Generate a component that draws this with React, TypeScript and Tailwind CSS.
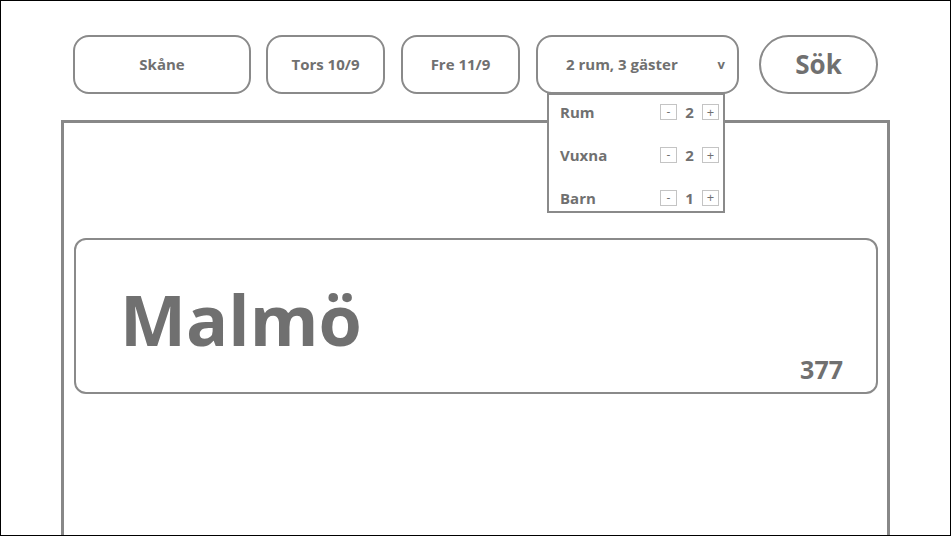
import React from "react";

const rows = [
  { label: "Rum", value: 2 },
  { label: "Vuxna", value: 2 },
  { label: "Barn", value: 1 },
];

function Pill({ text, width }: { text: string; width: string }) {
  return (
    <div
      className={`${width} h-[59px] flex items-center justify-center rounded-[16px] border-2 border-[#8a8a8a] text-[15px] font-bold`}
    >
      {text}
    </div>
  );
}

export default function App() {
  return (
    <div
      className="w-[951px] h-[536px] overflow-hidden border border-black bg-white text-[#707070]"
      style={{ fontFamily: '"Open Sans", "Noto Sans", sans-serif' }}
    >
      <div className="flex items-start pt-[34px] pl-[72px]">
        <Pill text="Skåne" width="w-[178px]" />
        <div className="ml-[15px]">
          <Pill text="Tors 10/9" width="w-[119px]" />
        </div>
        <div className="ml-[16px]">
          <Pill text="Fre 11/9" width="w-[119px]" />
        </div>

        <div className="relative ml-[16px] z-10">
          <div className="w-[203px] h-[59px] flex items-center rounded-[16px] border-2 border-[#8a8a8a] text-[15px] font-bold">
            <span className="ml-[28px]">2 rum, 3 gäster</span>
            <span className="ml-auto mr-[12px] text-[13px]">v</span>
          </div>
          <div className="absolute left-[11px] top-[58px] w-[178px] h-[120px] bg-white border-2 border-[#8a8a8a] flex flex-col justify-between pt-[6px] pb-[2px]">
            {rows.map((r) => (
              <div key={r.label} className="flex items-center pl-[11px] pr-[4px]">
                <span className="text-[15px] font-bold">{r.label}</span>
                <div className="ml-auto flex items-center">
                  <span className="w-[17px] h-[16px] flex items-center justify-center border border-[#c4c4c4] text-[12px] leading-none">
                    -
                  </span>
                  <span className="w-[25px] text-center text-[15px] font-bold">{r.value}</span>
                  <span className="w-[17px] h-[16px] flex items-center justify-center border border-[#c4c4c4] text-[13px] leading-none">
                    +
                  </span>
                </div>
              </div>
            ))}
          </div>
        </div>

        <div className="ml-[20px] w-[119px] h-[59px] flex items-center justify-center rounded-full border-2 border-[#8a8a8a] text-[26px] font-bold">
          Sök
        </div>
      </div>

      <div className="ml-[60px] mt-[26px] w-[829px] h-[440px] border-[3px] border-[#888888] pt-[115px] pl-[10px] pr-[9px]">
        <div className="h-[156px] rounded-[12px] border-2 border-[#8a8a8a] flex flex-col pl-[44px] pr-[33px]">
          <div className="mt-[44px] text-[70px] font-bold leading-none">Malmö</div>
          <div className="mt-auto mb-[10px] self-end text-[25px] font-bold leading-none">377</div>
        </div>
      </div>
    </div>
  );
}
